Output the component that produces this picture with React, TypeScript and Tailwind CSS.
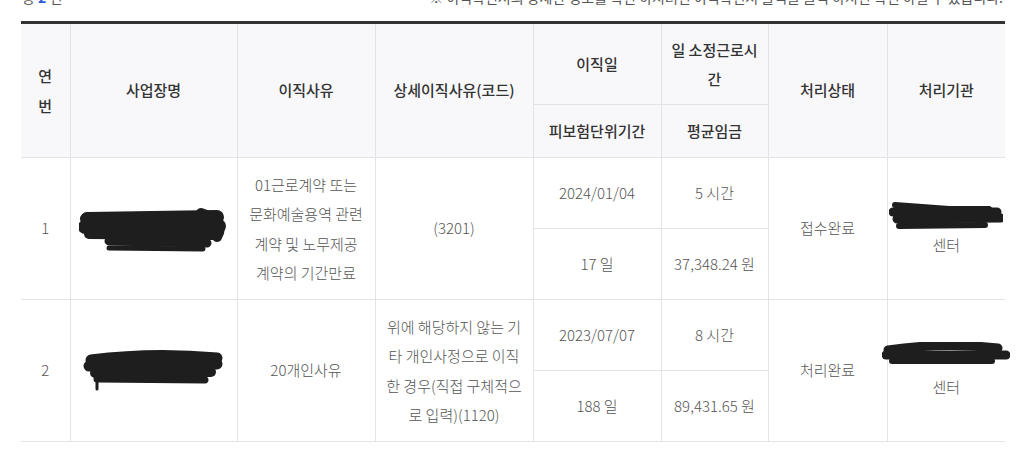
import React from "react";

const font = { fontFamily: '"Noto Sans CJK KR", "Noto Sans", sans-serif' };

function Scribble({ w, h, paths }: { w: number; h: number; paths: { d: string; sw: number }[] }) {
  return (
    <svg width={w} height={h} viewBox={`0 0 ${w} ${h}`} className="block">
      {paths.map((p, i) => (
        <path key={i} d={p.d} stroke="#1e1e1e" strokeWidth={p.sw} strokeLinecap="round" strokeLinejoin="round" fill="none" />
      ))}
    </svg>
  );
}

const th = "border-b border-l border-[#e2e3e6] bg-[#f8f8fa] text-[15px] font-medium text-[#333] text-center align-middle";
const td = "border-b border-l border-[#e2e3e6] bg-white text-[15px] font-light text-[#555] text-center align-middle";

export default function App() {
  return (
    <div className="w-[1025px] h-[453px] bg-white overflow-hidden" style={font}>
      <div className="h-[6px] overflow-hidden flex items-end justify-between pl-[22px] pr-[22px]">
        <span className="text-[14px] leading-[18px] text-[#555]">
          총 <span className="text-[#2a5bd7] font-bold">2</span> 건
        </span>
        <span className="text-[14px] leading-[18px] text-[#555]">
          ※ 이직확인서의 상세한 정보를 확인 하시려면 이직확인서 출력을 클릭 하시면 확인 하실 수 있습니다.
        </span>
      </div>
      <div className="pt-[15px] pl-[21px]">
        <table className="table-fixed border-collapse border-t-[3px] border-t-[#333] w-[984px]">
          <colgroup>
            <col className="w-[49px]" />
            <col className="w-[167px]" />
            <col className="w-[138px]" />
            <col className="w-[158px]" />
            <col className="w-[128px]" />
            <col className="w-[107px]" />
            <col className="w-[119px]" />
            <col className="w-[118px]" />
          </colgroup>
          <thead>
            <tr className="h-[82px]">
              <th rowSpan={2} className={th + " border-l-0 leading-[30px]"}>
                <span className="block">연</span>
                <span className="block">번</span>
              </th>
              <th rowSpan={2} className={th}>사업장명</th>
              <th rowSpan={2} className={th}>이직사유</th>
              <th rowSpan={2} className={th}>상세이직사유(코드)</th>
              <th className={th}>이직일</th>
              <th className={th + " leading-[29px]"}>
                <span className="block">일 소정근로시</span>
                <span className="block">간</span>
              </th>
              <th rowSpan={2} className={th}>처리상태</th>
              <th rowSpan={2} className={th}>처리기관</th>
            </tr>
            <tr className="h-[53px]">
              <th className={th}>피보험단위기간</th>
              <th className={th}>평균임금</th>
            </tr>
          </thead>
          <tbody>
            <tr className="h-[71px]">
              <td rowSpan={2} className={td + " border-l-0"}>1</td>
              <td rowSpan={2} className={td}>
                <div className="flex justify-center">
                  <Scribble
                    w={150}
                    h={48}
                    paths={[
                      { d: "M8 14 L138 12", sw: 14 },
                      { d: "M6 22 L140 21", sw: 14 },
                      { d: "M10 29 L136 30", sw: 10 },
                      { d: "M30 36 L128 38", sw: 9 },
                      { d: "M30 43 L124 44", sw: 5 },
                      { d: "M122 8 Q148 16 138 32", sw: 10 },
                    ]}
                  />
                </div>
              </td>
              <td rowSpan={2} className={td + " leading-[29.5px]"}>
                <span className="block">01근로계약 또는</span>
                <span className="block">문화예술용역 관련</span>
                <span className="block">계약 및 노무제공</span>
                <span className="block">계약의 기간만료</span>
              </td>
              <td rowSpan={2} className={td}>(3201)</td>
              <td className={td}>2024/01/04</td>
              <td className={td}>5 시간</td>
              <td rowSpan={2} className={td}>접수완료</td>
              <td rowSpan={2} className={td}>
                <div className="flex flex-col items-center">
                  <Scribble
                    w={114}
                    h={32}
                    paths={[
                      { d: "M6 5 L60 9 L100 9", sw: 6 },
                      { d: "M4 12 L108 12", sw: 9 },
                      { d: "M8 19 L112 18", sw: 9 },
                      { d: "M10 26 L96 25", sw: 6 },
                    ]}
                  />
                  <span className="block mt-[2px]">센터</span>
                </div>
              </td>
            </tr>
            <tr className="h-[71px]">
              <td className={td}>17 일</td>
              <td className={td}>37,348.24 원</td>
            </tr>
            <tr className="h-[71px]">
              <td rowSpan={2} className={td + " border-l-0"}>2</td>
              <td rowSpan={2} className={td}>
                <div className="flex justify-center">
                  <Scribble
                    w={142}
                    h={44}
                    paths={[
                      { d: "M8 11 Q70 3 134 9", sw: 11 },
                      { d: "M6 17 L134 15", sw: 11 },
                      { d: "M12 24 L128 23", sw: 10 },
                      { d: "M14 30 L122 31", sw: 7 },
                      { d: "M14 20 L14 40", sw: 3 },
                    ]}
                  />
                </div>
              </td>
              <td rowSpan={2} className={td}>20개인사유</td>
              <td rowSpan={2} className={td + " leading-[29.5px]"}>
                <span className="block">위에 해당하지 않는 기</span>
                <span className="block">타 개인사정으로 이직</span>
                <span className="block">한 경우(직접 구체적으</span>
                <span className="block">로 입력)(1120)</span>
              </td>
              <td className={td}>2023/07/07</td>
              <td className={td}>8 시간</td>
              <td rowSpan={2} className={td}>처리완료</td>
              <td rowSpan={2} className={td}>
                <div className="flex flex-col items-center">
                  <Scribble
                    w={128}
                    h={28}
                    paths={[
                      { d: "M6 8 Q60 0 116 6", sw: 9 },
                      { d: "M4 13 L124 13", sw: 9 },
                      { d: "M10 19 L110 19", sw: 6 },
                    ]}
                  />
                  <span className="block mt-[6px]">센터</span>
                </div>
              </td>
            </tr>
            <tr className="h-[71px]">
              <td className={td}>188 일</td>
              <td className={td}>89,431.65 원</td>
            </tr>
          </tbody>
        </table>
      </div>
    </div>
  );
}
